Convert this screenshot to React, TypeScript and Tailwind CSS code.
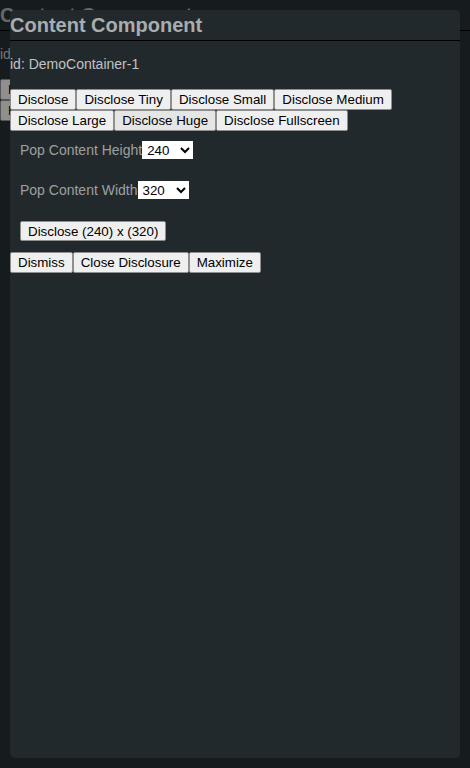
const font = { fontFamily: '"Liberation Sans", Arial, sans-serif' };

function Btn({ label, active = false }: { label: string; active?: boolean }) {
  return (
    <button
      className={
        'h-[21px] border border-[#8f8f8f] rounded-[2px] px-[7px] text-[13.33px] leading-[15px] text-black ' +
        (active ? 'bg-[#e5e5e5]' : 'bg-[#efefef]')
      }
    >
      {label}
    </button>
  );
}

function SizeSelect({ value, options }: { value: string; options: string[] }) {
  return (
    <select
      defaultValue={value}
      className="h-[18px] w-[51px] bg-white text-black text-[13.33px] leading-[15px] pl-[1px] rounded-none"
    >
      {options.map((o) => (
        <option key={o} value={o}>
          {o}
        </option>
      ))}
    </select>
  );
}

function Header() {
  return (
    <>
      <h2 className="pt-1 pb-[3px] border-b border-black text-[20px] leading-[23px] font-bold text-[#a9adaf]">
        Content Component
      </h2>
      <div className="mt-[15px] text-[14px] leading-[16px] text-[#c0c2c3]">id: DemoContainer-1</div>
    </>
  );
}

function DiscloseButtons({ huge = false }: { huge?: boolean }) {
  return (
    <div className="mt-[17px] flex flex-wrap w-[450px]">
      <Btn label="Disclose" />
      <Btn label="Disclose Tiny" />
      <Btn label="Disclose Small" />
      <Btn label="Disclose Medium" />
      <Btn label="Disclose Large" />
      <Btn label="Disclose Huge" active={huge} />
      <Btn label="Disclose Fullscreen" />
    </div>
  );
}

function Content() {
  return (
    <div className="flex flex-col">
      <Header />
      <DiscloseButtons huge />

      <div className="pl-[10px] flex flex-col items-start">
        <div className="mt-[10px] flex items-center h-[18px] text-[14px] text-[#9da0a2]">
          <span>Pop Content Height</span>
          <SizeSelect value="240" options={['120', '240', '360', '480']} />
        </div>
        <div className="mt-[22px] flex items-center h-[18px] text-[14px] text-[#9da0a2]">
          <span>Pop Content Width</span>
          <SizeSelect value="320" options={['160', '320', '480', '640']} />
        </div>
        <div className="mt-[22px] flex">
          <button className="h-[20px] border border-[#8f8f8f] rounded-[2px] px-[7px] text-[13.33px] leading-[15px] text-black bg-[#efefef]">
            Disclose (240) x (320)
          </button>
        </div>
      </div>

      <div className="mt-[11px] flex">
        <Btn label="Dismiss" />
        <Btn label="Close Disclosure" />
        <Btn label="Maximize" />
      </div>
    </div>
  );
}

export default function App() {
  return (
    <div style={font} className="relative w-[470px] h-[768px] overflow-hidden bg-[#252d31]">
      {/* page underneath the pop-up */}
      <div className="flex flex-col">
        <Header />
        <DiscloseButtons />
      </div>
      <div className="absolute inset-0 bg-black/40" />
      <div className="absolute left-[10px] top-[10px] w-[450px] h-[748px] rounded-[5px] bg-[#22292c] overflow-hidden">
        <Content />
      </div>
    </div>
  );
}
